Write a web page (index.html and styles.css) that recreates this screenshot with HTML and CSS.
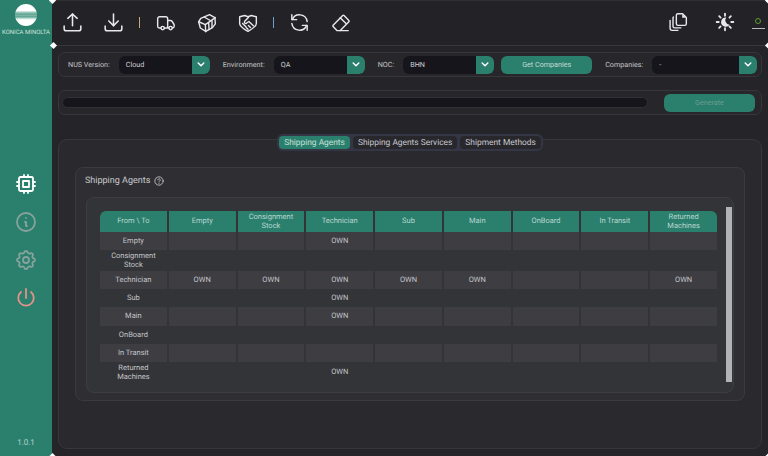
FILE: index.html
```html
<!DOCTYPE html>
<html lang="en">
<head>
<meta charset="utf-8">
<title>Shipping Agents</title>
<link rel="stylesheet" href="styles.css">
</head>
<body>
<div class="app">
  <aside class="sidebar">
    <div class="logo-mark"></div>
    <div class="logo-text">KONICA MINOLTA</div>
    <nav class="side-nav">
      <svg class="ico side-ico white" viewBox="0 0 24 24"><rect x="5" y="5" width="14" height="14" rx="1.5"/><path d="M9 9h6v6H9z"/><path d="M3 10h2M3 14h2M10 3v2M14 3v2M21 10h-2M21 14h-2M14 21v-2M10 21v-2"/></svg>
      <svg class="ico side-ico muted" viewBox="0 0 24 24"><circle cx="12" cy="12" r="9"/><path d="M12 8h.01M11 12h1v4h1"/></svg>
      <svg class="ico side-ico muted" viewBox="0 0 24 24"><path d="M10.325 4.317c.426-1.756 2.924-1.756 3.35 0a1.724 1.724 0 0 0 2.573 1.066c1.543-.94 3.31.826 2.37 2.37a1.724 1.724 0 0 0 1.065 2.572c1.756.426 1.756 2.924 0 3.35a1.724 1.724 0 0 0-1.066 2.573c.94 1.543-.826 3.31-2.37 2.37a1.724 1.724 0 0 0-2.572 1.065c-.426 1.756-2.924 1.756-3.35 0a1.724 1.724 0 0 0-2.573-1.066c-1.543.94-3.31-.826-2.37-2.37a1.724 1.724 0 0 0-1.065-2.572c-1.756-.426-1.756-2.924 0-3.35a1.724 1.724 0 0 0 1.066-2.573c-.94-1.543.826-3.31 2.37-2.37 1 .608 2.296.07 2.572-1.065z"/><circle cx="12" cy="12" r="3"/></svg>
      <svg class="ico side-ico salmon" viewBox="0 0 24 24"><path d="M7 6a7.75 7.75 0 1 0 10 0"/><path d="M12 3v9"/></svg>
    </nav>
    <div class="version">1.0.1</div>
  </aside>

  <main class="main">
    <header class="toolbar">
      <div class="tool"><svg class="ico tool-ico" viewBox="0 0 24 24"><path d="M4 15.500V18a2 2 0 0 0 2 2h12a2 2 0 0 0 2-2v-2.500"/><path d="M7.500 8L12 3.800 16.500 8"/><path d="M12 3.800V15"/></svg></div>
      <div class="tool"><svg class="ico tool-ico" viewBox="0 0 24 24"><path d="M4 15.500V18a2 2 0 0 0 2 2h12a2 2 0 0 0 2-2v-2.500"/><path d="M7.500 10.500L12 15l4.500-4.500"/><path d="M12 3.800V15"/></svg></div>
      <div class="sep"><span class="sep-bar tan"></span></div>
      <div class="tool"><svg class="ico tool-sm" viewBox="0 0 24 24"><circle cx="8" cy="18" r="2"/><circle cx="17.500" cy="18" r="2"/><path d="M6 18H4a2 2 0 0 1-2-2V7a2.500 2.500 0 0 1 2.500-2.500h7A2.500 2.500 0 0 1 14 7v11m-4 0h5.500"/><path d="M14 9h3.500a2 2 0 0 1 1.700.9l2.300 3.600a2 2 0 0 1 .3 1V16a2 2 0 0 1-2 2h-.3"/></svg></div>
      <div class="tool"><svg class="ico tool-sm" viewBox="0 0 24 24"><path d="M2 10.500l2.500-4L15 2l6.500 3.500 .5 7.500-3.500 4.500-8 4.500-6.500-4z"/><path d="M2 10.500l8 3.500 12-8.500"/><path d="M10 14l.5 8.500M14 12l.5 8M18 9.500v8M8.500 4.800L16 9"/></svg></div>
      <div class="tool"><svg class="ico tool-sm" viewBox="0 0 24 24"><path d="M2 4.500L8 3l4 1.500L16 3l6 1.500v8c0 3.200-5.500 7-10 9.500-4.500-2.500-10-6.300-10-9.500z"/><path d="M12.500 5.500L8 10a1.600 1.600 0 0 0 2.500 2l2.500-1.800 5.500 5"/><path d="M15 17.500l-2.500-2.500M12 19.500l-2.200-2.200M5.500 12.500l4 4"/></svg></div>
      <div class="sep"><span class="sep-bar blue"></span></div>
      <div class="tool"><svg class="ico tool-mid" viewBox="0 0 24 24"><path d="M20 11A8.100 8.100 0 0 0 4.500 9"/><path d="M4 4v5h5"/><path d="M4 13a8.100 8.100 0 0 0 15.500 2"/><path d="M20 20v-5h-5"/></svg></div>
      <div class="tool"><svg class="ico tool-mid" viewBox="0 0 24 24"><path d="M20 20.500H8.500l-4.200-4.300a1 1 0 0 1 0-1.400l10-10a1 1 0 0 1 1.400 0l5 5a1 1 0 0 1 0 1.400l-9.200 9.300"/><path d="M18 13.300L11.700 7"/></svg></div>
      <div class="tool-right">
        <div class="tool-wide"><svg class="ico tool-sm" viewBox="0 0 24 24"><path d="M12 2h5.500L22 6.500V14a2 2 0 0 1-2 2h-8a2 2 0 0 1-2-2V4a2 2 0 0 1 2-2z"/><path class="solid" d="M17 2.500v4.500h4.500z"/><path d="M6.500 6A2 2 0 0 0 6 7.500V17a2 2 0 0 0 2 2h7.500"/><path d="M2.500 10v9.500a2.500 2.500 0 0 0 2.500 2.500h7"/></svg></div>
        <div class="tool-wide"><svg class="ico tool-sun" viewBox="0 0 24 24"><path d="M12 2v2.500M12 19.500V22M2 12h2.500M19.500 12H22M5 5l1.700 1.700M17.300 17.300L19 19M19 5l-1.700 1.700M6.700 17.300L5 19"/><path class="solid" d="M13.500 6.500a5.600 5.600 0 1 0 4 8.800 5.500 5.500 0 0 1-4-8.800z"/></svg></div>
        <div class="status"><span class="status-dot"></span></div>
      </div>
    </header>

    <section class="panel filters">
      <span class="lbl lbl-first">NUS Version:</span>
      <div class="select"><span class="select-val">Cloud</span><span class="select-btn"><svg class="chev" viewBox="0 0 10 6"><path d="M1.500 1l3.500 3.500L8.500 1"/></svg></span></div>
      <span class="lbl">Environment:</span>
      <div class="select"><span class="select-val">QA</span><span class="select-btn"><svg class="chev" viewBox="0 0 10 6"><path d="M1.500 1l3.500 3.500L8.500 1"/></svg></span></div>
      <span class="lbl">NOC:</span>
      <div class="select"><span class="select-val">BHN</span><span class="select-btn"><svg class="chev" viewBox="0 0 10 6"><path d="M1.500 1l3.500 3.500L8.500 1"/></svg></span></div>
      <button class="btn btn-get">Get Companies</button>
      <span class="lbl">Companies:</span>
      <div class="select select-wide"><span class="select-val">-</span><span class="select-btn"><svg class="chev" viewBox="0 0 10 6"><path d="M1.500 1l3.500 3.500L8.500 1"/></svg></span></div>
    </section>

    <section class="panel progress">
      <div class="bar"></div>
      <button class="btn btn-gen">Generate</button>
    </section>

    <section class="tabs-panel">
      <div class="tabs">
        <span class="tab active">Shipping Agents</span>
        <span class="tab">Shipping Agents Services</span>
        <span class="tab">Shipment Methods</span>
      </div>
      <div class="card">
        <div class="card-title">Shipping Agents <svg class="ico help" viewBox="0 0 24 24"><circle cx="12" cy="12" r="10"/><path d="M9 9.500a3 3 0 1 1 4.500 2.600c-1 .6-1.500 1.200-1.500 2.400M12 17.800v.1"/></svg></div>
        <div class="inner">
          <div class="matrix">
            <div class="c h first">From \ To</div><div class="c h">Empty</div><div class="c h">Consignment Stock</div><div class="c h">Technician</div><div class="c h">Sub</div><div class="c h">Main</div><div class="c h">OnBoard</div><div class="c h">In Transit</div><div class="c h last">Returned Machines</div>

            <div class="c s">Empty</div><div class="c s"></div><div class="c s"></div><div class="c s">OWN</div><div class="c s"></div><div class="c s"></div><div class="c s"></div><div class="c s"></div><div class="c s"></div>

            <div class="c">Consignment Stock</div><div class="c"></div><div class="c"></div><div class="c"></div><div class="c"></div><div class="c"></div><div class="c"></div><div class="c"></div><div class="c"></div>

            <div class="c s">Technician</div><div class="c s">OWN</div><div class="c s">OWN</div><div class="c s">OWN</div><div class="c s">OWN</div><div class="c s">OWN</div><div class="c s"></div><div class="c s"></div><div class="c s">OWN</div>

            <div class="c">Sub</div><div class="c"></div><div class="c"></div><div class="c">OWN</div><div class="c"></div><div class="c"></div><div class="c"></div><div class="c"></div><div class="c"></div>

            <div class="c s">Main</div><div class="c s"></div><div class="c s"></div><div class="c s">OWN</div><div class="c s"></div><div class="c s"></div><div class="c s"></div><div class="c s"></div><div class="c s"></div>

            <div class="c">OnBoard</div><div class="c"></div><div class="c"></div><div class="c"></div><div class="c"></div><div class="c"></div><div class="c"></div><div class="c"></div><div class="c"></div>

            <div class="c s">In Transit</div><div class="c s"></div><div class="c s"></div><div class="c s"></div><div class="c s"></div><div class="c s"></div><div class="c s"></div><div class="c s"></div><div class="c s"></div>

            <div class="c">Returned Machines</div><div class="c"></div><div class="c"></div><div class="c">OWN</div><div class="c"></div><div class="c"></div><div class="c"></div><div class="c"></div><div class="c"></div>
          </div>
          <div class="scrollbar"></div>
        </div>
      </div>
    </section>
  </main>

  <span class="notch n-tl"></span>
  <span class="notch n-ml"></span>
  <span class="notch n-bl"></span>
  <span class="notch n-tr"></span>
  <span class="notch n-mr"></span>
  <span class="notch n-br"></span>
</div>
</body>
</html>
```

FILE: styles.css
```css
* { box-sizing: border-box; }
html, body { margin: 0; padding: 0; }
body {
  width: 768px;
  height: 456px;
  overflow: hidden;
  font-family: Roboto, "Liberation Sans", sans-serif;
  font-size: 7.500px;
  text-rendering: geometricPrecision;
  color: #c9c9cd;
  background: #252529;
}
.app { position: relative; display: flex; width: 768px; height: 456px; }

/* sidebar */
.sidebar {
  width: 52px;
  flex: none;
  display: flex;
  flex-direction: column;
  align-items: center;
  background: #2a7f6d;
}
.logo-mark {
  width: 22px;
  height: 22px;
  margin-top: 4px;
  border-radius: 50%;
  background: linear-gradient(#fff 0, #fff 30%, #a5cfc5 37%, #5fa392 46%, #7cb4a6 52%, #5fa392 58%, #c0ded6 66%, #fff 72%, #fff 100%);
}
.logo-text {
  margin-top: 3px;
  font-size: 6px;
  line-height: 7px;
  color: #cfe3de;
  white-space: nowrap;
}
.side-nav {
  display: flex;
  flex-direction: column;
  gap: 14px;
  margin-top: 136px;
}
.version {
  margin-top: auto;
  margin-bottom: 8px;
  font-size: 8px;
  line-height: 10px;
  color: #b5d2cb;
}

/* icons */
.ico { fill: none; stroke-linecap: round; stroke-linejoin: round; display: block; }
.solid { fill: #e8e8ea; stroke: none; }
.side-ico { width: 24px; height: 24px; stroke-width: 1.800; }
.white { stroke: #fff; }
.muted { stroke: #86a39c; }
.salmon { stroke: #e0938a; }
.tool-ico { width: 25px; height: 25px; stroke: #e8e8ea; stroke-width: 1.500; }
.tool-mid { width: 23px; height: 23px; stroke: #e8e8ea; stroke-width: 1.500; }
.tool-sm { width: 20px; height: 20px; stroke: #e8e8ea; stroke-width: 1.700; }
.tool-sun { width: 20px; height: 20px; stroke: #e8e8ea; stroke-width: 2.200; }

/* main */
.main {
  flex: 1;
  display: flex;
  flex-direction: column;
  min-width: 0;
  padding-bottom: 7px;
}
.toolbar {
  height: 46px;
  flex: none;
  display: flex;
  align-items: center;
  padding-bottom: 1px;
  background: #222227;
  border-bottom: 1px solid #37373c;
  border-top: 1px solid #2f2f34;
}
.tool { width: 41px; display: flex; justify-content: center; }
.sep { width: 11px; display: flex; justify-content: center; }
.sep-bar { width: 1px; height: 11px; }
.tan { background: #c8a878; }
.blue { background: #6f9fd0; }
.tool-right { margin-left: auto; display: flex; align-items: center; padding-right: 3px; }
.tool-wide { width: 47px; display: flex; justify-content: center; margin-top: -2px; }
.status {
  width: 13px;
  height: 13px;
  margin-left: 4px;
  padding-left: 3px;
  border-bottom: 1px solid #b9b9bd;
  margin-top: -1px;
}
.status-dot {
  display: block;
  width: 6px;
  height: 6px;
  margin-top: 2px;
  border: 1.500px solid #5f9a2c;
  border-radius: 50%;
}

/* panels */
.panel {
  margin: 0 6px;
  display: flex;
  align-items: center;
  height: 25px;
  font-size: 7.200px;
  background: #27272b;
  border: 1px solid #36363b;
  border-radius: 7px;
}
.filters { margin-top: 6px; padding-left: 9px; }
.lbl { margin: 0 9px 0 13px; color: #c5c5c9; white-space: nowrap; }
.lbl-first { margin-left: 0; }
.select {
  width: 91px;
  height: 18px;
  flex: none;
  display: flex;
  border-radius: 6px;
  overflow: hidden;
  background: #15151b;
}
.select-wide { width: 105px; }
.select-val { flex: 1; padding-left: 7px; line-height: 18px; color: #d0d0d4; }
.select-btn {
  width: 18px;
  display: flex;
  align-items: center;
  justify-content: center;
  background: #2a7f6d;
}
.chev { width: 8px; height: 5px; fill: none; stroke: #fff; stroke-width: 1.800; stroke-linecap: round; stroke-linejoin: round; }
.btn {
  width: 91px;
  height: 18px;
  flex: none;
  border: 0;
  padding: 0;
  border-radius: 6px;
  background: #2a7f6d;
  font: inherit;
  color: #c4dcd6;
}
.btn-get { margin-left: 7px; }
.progress { margin-top: 13px; padding: 0 6px 0 3px; }
.bar {
  width: 586px;
  height: 11px;
  flex: none;
  background: #15151b;
  border: 1px solid #303035;
  border-radius: 6px;
}
.btn-gen { margin-left: 16px; color: #6c9c90; }

/* tabs panel */
.tabs-panel {
  flex: 1;
  margin: 24px 6px 0;
  display: flex;
  flex-direction: column;
  background: #2a2a2e;
  border: 1px solid #36363b;
  border-radius: 9px;
}
.tabs {
  align-self: center;
  display: flex;
  gap: 3px;
  margin-top: -6px;
  padding: 2px 2px;
  height: 17px;
  background: #343645;
  border-radius: 6px;
}
.tab {
  padding: 0 5px;
  height: 13px;
  line-height: 14px;
  font-size: 8.400px;
  color: #c8c8cc;
  background: #27272c;
  border-radius: 4px;
  white-space: nowrap;
}
.tab.active { background: #2a7f6d; color: #c6e0da; }
.card {
  flex: 1;
  margin: 16px 16px 47px;
  padding: 0 10px 7px;
  display: flex;
  flex-direction: column;
  background: #2f2f33;
  border: 1px solid #3a3a3f;
  border-radius: 8px;
}
.card-title {
  height: 29px;
  flex: none;
  display: flex;
  align-items: center;
  gap: 4px;
  margin-left: -1px;
  padding-bottom: 4px;
  font-size: 9px;
  color: #c9c9cd;
}
.help { width: 10px; height: 10px; stroke: #d0d0d4; stroke-width: 2; }
.inner {
  flex: 1;
  display: flex;
  padding: 13px 0 0 13px;
  background: #333438;
  border: 1px solid #3d3d42;
  border-radius: 8px;
}
.matrix {
  width: 617px;
  height: 172px;
  flex: none;
  display: grid;
  grid-template-columns: repeat(9, 1fr);
  grid-template-rows: 21px 18px 21px 18px 18px 19px 18px 18px 21px;
  column-gap: 2px;
}
.c {
  display: flex;
  align-items: center;
  justify-content: center;
  text-align: center;
  padding: 0 6px;
  line-height: 8.500px;
  color: #c4c4c9;
}
.s { background: #3e3d42; }
.h { background: #2a7f6d; color: #b9d6cf; }
.first { border-top-left-radius: 6px; }
.last { border-top-right-radius: 6px; }
.scrollbar {
  width: 6px;
  height: 175px;
  flex: none;
  margin: -4px 0 0 9px;
  background: #b3b3b7;
}

/* corner marks */
.notch {
  position: absolute;
  width: 5px;
  height: 5px;
  background: #fff;
  transform: rotate(45deg);
}
.n-tl { left: 49.500px; top: -2.500px; }
.n-ml { left: 50.500px; top: 43px; }
.n-bl { left: 49.500px; top: 453.500px; }
.n-tr { left: 765.500px; top: -2.500px; }
.n-mr { left: 765.500px; top: 43px; }
.n-br { left: 765.500px; top: 453.500px; }
```
